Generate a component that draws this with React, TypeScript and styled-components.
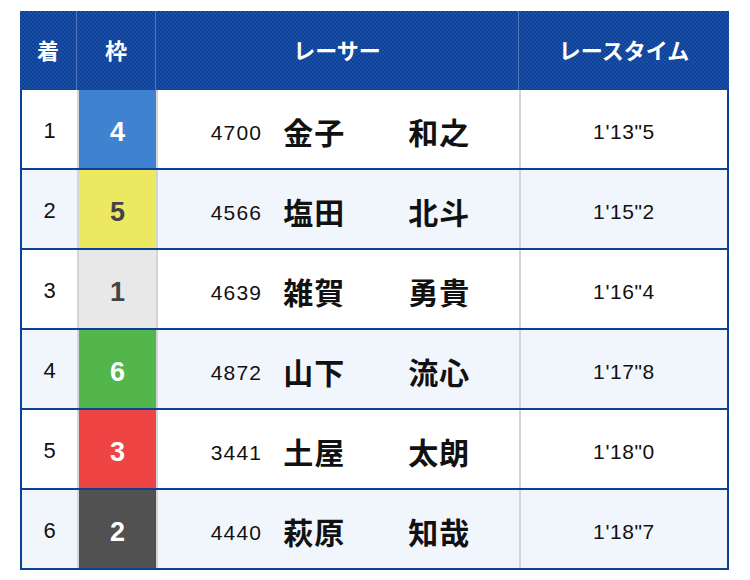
import * as React from 'react';
import styled, { createGlobalStyle } from 'styled-components';

const GlobalStyle = createGlobalStyle`
    body {
        margin: 0;
        background: #ffffff;
        font-family: "Liberation Sans", "Noto Sans CJK JP", sans-serif;
    }
`;

const Page = styled.div`
    padding: 11px 21px 0 20px;
`;

const Table = styled.div`
    width: 709px;
`;

const HeaderRow = styled.div`
    display: grid;
    grid-template-columns: 56px 78px 362px 1fr;
    column-gap: 1px;
    height: 79px;
    background: repeating-conic-gradient(#0d3f93 0 25%, #1b51ab 0 50%) 0 0 / 4px 4px;
`;

const HeaderCell = styled.div`
    display: flex;
    align-items: center;
    justify-content: center;
    padding-bottom: 4px;
    font-family: "Noto Sans CJK JP", sans-serif;
    font-size: 22px;
    font-weight: 700;
    color: #ffffff;
    box-shadow: 1px 0 0 rgba(130, 160, 220, 0.55);
    &:last-child {
        box-shadow: none;
    }
`;

const Body = styled.div`
    border: 2px solid #0a4199;
    border-top: none;
`;

const Row = styled.div<{ $alt: boolean }>`
    display: grid;
    grid-template-columns: 55px 77px 361px 1fr;
    column-gap: 2px;
    height: 78px;
    background: #d4d4d4;
    border-bottom: 2px solid #0a4199;
    --row-bg: ${p => (p.$alt ? '#f1f6fd' : '#ffffff')};
    &:last-child {
        border-bottom: none;
    }
`;

const Cell = styled.div`
    display: flex;
    align-items: center;
    justify-content: center;
    padding-top: 6px;
    background: var(--row-bg);
    color: #111111;
`;

const Rank = styled(Cell)`
    padding-top: 4px;
    font-size: 22px;
`;

const Waku = styled(Cell)<{ $bg: string; $fg: string }>`
    background: ${p => p.$bg};
    color: ${p => p.$fg};
    font-size: 27px;
    font-weight: 700;
`;

const Racer = styled(Cell)`
    gap: 21px;
    padding-left: 4px;
    padding-top: 4px;
`;

const RacerNo = styled.span`
    padding-top: 4px;
    font-size: 21px;
    letter-spacing: 1.2px;
`;

const RacerName = styled.span`
    display: flex;
    gap: 63px;
    font-family: "Noto Sans CJK JP", sans-serif;
    font-size: 30px;
    font-weight: 700;
    letter-spacing: 1px;
`;

const Time = styled(Cell)`
    font-size: 21px;
    letter-spacing: 0.6px;
`;

const wakuColors: Record<number, { bg: string; fg: string }> = {
    1: { bg: '#e8e8e8', fg: '#444444' },
    2: { bg: '#515151', fg: '#ffffff' },
    3: { bg: '#ef4444', fg: '#ffffff' },
    4: { bg: '#3f83d0', fg: '#ffffff' },
    5: { bg: '#ece85f', fg: '#444444' },
    6: { bg: '#52b64c', fg: '#ffffff' }
};

const results = [
    { rank: 1, waku: 4, no: '4700', sei: '金子', mei: '和之', time: `1'13"5` },
    { rank: 2, waku: 5, no: '4566', sei: '塩田', mei: '北斗', time: `1'15"2` },
    { rank: 3, waku: 1, no: '4639', sei: '雑賀', mei: '勇貴', time: `1'16"4` },
    { rank: 4, waku: 6, no: '4872', sei: '山下', mei: '流心', time: `1'17"8` },
    { rank: 5, waku: 3, no: '3441', sei: '土屋', mei: '太朗', time: `1'18"0` },
    { rank: 6, waku: 2, no: '4440', sei: '萩原', mei: '知哉', time: `1'18"7` }
];

export default function App() {
    return (
        <Page>
            <GlobalStyle />
            <Table>
                <HeaderRow>
                    <HeaderCell>着</HeaderCell>
                    <HeaderCell>枠</HeaderCell>
                    <HeaderCell>レーサー</HeaderCell>
                    <HeaderCell>レースタイム</HeaderCell>
                </HeaderRow>
                <Body>
                    {results.map((r, index) => (
                        <Row key={r.rank} $alt={index % 2 === 1}>
                            <Rank>{r.rank}</Rank>
                            <Waku $bg={wakuColors[r.waku].bg} $fg={wakuColors[r.waku].fg}>
                                {r.waku}
                            </Waku>
                            <Racer>
                                <RacerNo>{r.no}</RacerNo>
                                <RacerName>
                                    <span>{r.sei}</span>
                                    <span>{r.mei}</span>
                                </RacerName>
                            </Racer>
                            <Time>{r.time}</Time>
                        </Row>
                    ))}
                </Body>
            </Table>
        </Page>
    );
}
